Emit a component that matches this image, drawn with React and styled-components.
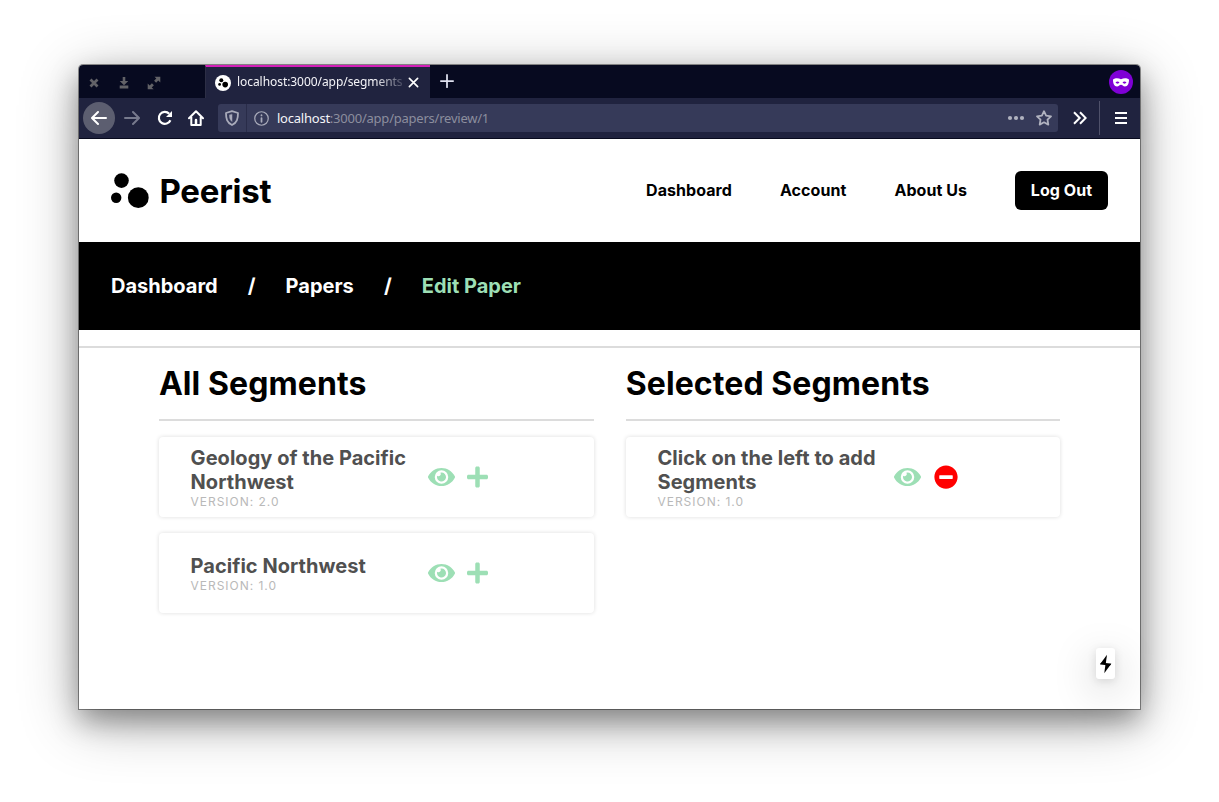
import React from "react";
import styled, { createGlobalStyle, css } from "styled-components";
import { FaEye, FaPlus, FaMinusCircle } from "react-icons/fa";

const GlobalStyle = createGlobalStyle`
  * { box-sizing: border-box; }
  body { margin: 0; background: #fff; }
`;

const Desktop = styled.div`
  height: 802px;
  overflow: hidden;
  padding: 65px 79px 93px;
  background: #fff;
`;

const BrowserWindow = styled.div`
  display: flex;
  flex-direction: column;
  width: 1061px;
  height: 644px;
  border-radius: 4px 4px 0 0;
  background: #fff;
  box-shadow: 0 0 0 1px rgba(0, 0, 0, 0.4), 0 12px 28px rgba(0, 0, 0, 0.34),
    0 12px 60px rgba(0, 0, 0, 0.3);
`;

const TitleBar = styled.div`
  display: flex;
  flex: 0 0 33px;
  background: #070a20;
  border-radius: 4px 4px 0 0;
`;

const WindowControls = styled.div`
  display: flex;
  align-items: center;
  width: 126px;
  padding: 2px 0 0 8px;
  gap: 16px;
  svg { display: block; }
`;

const Tab = styled.div`
  display: flex;
  align-items: center;
  width: 225px;
  padding: 0 11px 0 9px;
  background: #20233f;
  border-top: 2px solid #d31fb8;
  border-left: 1px solid #2c2e45;
`;

const TabTitle = styled.div`
  width: 167px;
  margin: 0 4px 2px 6px;
  overflow: hidden;
  white-space: nowrap;
  color: #f4f4f8;
  font: 12px/18px "Noto Sans", sans-serif;
  letter-spacing: -0.06px;
  mask-image: linear-gradient(to right, #000 138px, transparent 172px);
`;

const NewTab = styled.div`
  display: flex;
  align-items: center;
  padding: 0 0 1px 10px;
`;

const PrivateBadge = styled.div`
  display: flex;
  align-items: center;
  justify-content: center;
  width: 24px;
  height: 24px;
  margin: 5px 7px 0 auto;
  border-radius: 50%;
  background: #7f00d6;
`;

const Toolbar = styled.div`
  display: flex;
  flex: 0 0 41px;
  align-items: center;
  padding-left: 4px;
  background: #20233f;
  border-bottom: 1px solid #080a1e;
`;

const ToolButton = styled.div`
  display: flex;
  flex: 0 0 ${(p) => p.$width || 32}px;
  align-items: center;
  justify-content: center;
  height: 32px;
  ${(p) =>
    p.$round &&
    css`
      border-radius: 50%;
      background: #5c5e70;
    `}
`;

const AddressBar = styled.div`
  display: flex;
  flex: 0 0 840px;
  align-items: center;
  height: 28px;
  margin-left: 7px;
  border-radius: 3px;
  background: #363a59;
`;

const Shield = styled.div`
  display: flex;
  align-items: center;
  justify-content: center;
  width: 29px;
  height: 28px;
  border-right: 1px solid #292c49;
`;

const Url = styled.div`
  flex: 1;
  margin-left: 2px;
  color: #8c8e9e;
  font: 13px/18px "Noto Sans", sans-serif;
  letter-spacing: -0.23px;
  span { color: #f4f4f8; }
`;

const AddressActions = styled.div`
  display: flex;
  align-items: center;
  gap: 11px;
  padding-right: 6px;
`;

const MenuButton = styled.div`
  display: flex;
  align-items: center;
  justify-content: center;
  width: 41px;
  height: 34px;
  padding-left: 2px;
  border-left: 1px solid #4f516a;
`;

const Page = styled.div`
  position: relative;
  flex: 1;
  font-family: Inter, sans-serif;
  color: #000;
`;

const Header = styled.header`
  display: flex;
  align-items: center;
  justify-content: space-between;
  height: 103px;
  padding: 0 32px;
`;

const Brand = styled.div`
  display: flex;
  align-items: center;
  gap: 9.5px;
  font-size: 33px;
  font-weight: 700;
  line-height: 40px;
  letter-spacing: -0.25px;
`;

const Nav = styled.nav`
  display: flex;
  align-items: center;
  gap: 48px;
  font-size: 16px;
  font-weight: 700;
  line-height: 19px;
  letter-spacing: 0.06px;
`;

const LogOut = styled.button`
  width: 93px;
  height: 39px;
  padding: 0;
  border: 0;
  border-radius: 6px;
  background: #000;
  color: #fff;
  font: inherit;
  letter-spacing: inherit;
`;

const Breadcrumbs = styled.div`
  display: flex;
  align-items: center;
  gap: 30.1px;
  height: 88px;
  padding: 0 32px;
  background: #000;
  color: #fff;
  font-size: 20px;
  font-weight: 700;
  line-height: 24px;
`;

const Current = styled.span`
  color: #9ddfb5;
`;

const Content = styled.main`
  margin-top: 16px;
  border-top: 2px solid #dcdcdc;
`;

const Columns = styled.div`
  display: grid;
  grid-template-columns: 1fr 1fr;
  gap: 32px;
  width: 85%;
  margin: 0 auto;
`;

const Column = styled.section`
  display: flex;
  flex-direction: column;
  gap: 16px;
`;

const ColumnTitle = styled.h1`
  height: 73px;
  margin: 0;
  padding: 16px 0 0 0.3px;
  border-bottom: 2px solid #dcdcdc;
  font-size: 32px;
  font-weight: 700;
  line-height: 39px;
  letter-spacing: 0.08px;
`;

const Card = styled.article`
  display: flex;
  align-items: center;
  height: 80px;
  padding-left: 32px;
  border-radius: 4px;
  box-shadow: 0 0 4px rgba(0, 0, 0, 0.14);
`;

const CardText = styled.div`
  flex: 0 0 221px;
  margin-right: 15.95px;
`;

const CardTitle = styled.h2`
  margin: 0;
  color: #505050;
  font-size: 20px;
  font-weight: 700;
  line-height: 24px;
  letter-spacing: 0.04px;
`;

const Version = styled.div`
  color: #b9b9b9;
  font-size: 12px;
  line-height: 15px;
  letter-spacing: 0.97px;
`;

const Actions = styled.div`
  display: flex;
  align-items: center;
  gap: 12px;
  color: #9ddfb5;
  svg { display: block; height: 24px; }
`;

const EyeIcon = styled(FaEye)`
  width: 27px;
`;

const AddIcon = styled(FaPlus)`
  width: 21px;
`;

const RemoveIcon = styled(FaMinusCircle)`
  width: 24px;
  margin-left: 1px;
  color: #f00;
`;

const BoltBadge = styled.div`
  position: absolute;
  right: 25px;
  bottom: 30px;
  display: flex;
  align-items: center;
  justify-content: center;
  width: 19px;
  height: 31px;
  border-radius: 3px;
  background: #fff;
  box-shadow: 0 11px 40px rgba(0, 0, 0, 0.25), 0 2px 10px rgba(0, 0, 0, 0.12);
`;

const Stroke = ({ size = 16, color = "#fff", width = 2, children }) => (
  <svg width={size} height={size} viewBox="0 0 16 16" fill="none" stroke={color} strokeWidth={width} strokeLinecap="round" strokeLinejoin="round">
    {children}
  </svg>
);

const Favicon = () => (
  <svg width="16" height="16" viewBox="0 0 16 16">
    <circle cx="8" cy="8" r="8" fill="#fff" />
    <circle cx="6.3" cy="5.2" r="2" />
    <circle cx="4.6" cy="9.4" r="1.4" />
    <circle cx="10.2" cy="9.6" r="2.8" />
  </svg>
);

const Logo = () => (
  <svg width="39" height="36" viewBox="0 0 39 36">
    <circle cx="10.5" cy="7.6" r="7.3" />
    <circle cx="5.2" cy="24.7" r="5.2" />
    <circle cx="27.3" cy="24.7" r="10.4" />
  </svg>
);

const Bolt = () => (
  <svg width="15" height="20" viewBox="0 0 60 80">
    <path d="M36 3L30.74 41H8L36 3Z" />
    <path d="M25 77L30.26 39H53L25 77Z" />
    <path d="M13.5 33.5L53 39L47.5 46.5L8 41L13.5 33.5Z" />
  </svg>
);

const Segment = ({ title, version, children }) => (
  <Card>
    <CardText>
      <CardTitle>{title}</CardTitle>
      <Version>VERSION: {version}</Version>
    </CardText>
    <Actions>
      <EyeIcon />
      {children}
    </Actions>
  </Card>
);

export default function App() {
  return (
    <Desktop>
      <GlobalStyle />
      <BrowserWindow>
        <TitleBar>
          <WindowControls>
            <svg width="14" height="14" viewBox="0 0 14 14" stroke="#626267" strokeWidth="2.8">
              <path d="M3.500 3.500l7 7M10.500 3.500l-7 7" />
            </svg>
            <svg width="14" height="14" viewBox="0 0 14 14" fill="#626267">
              <path d="M5.700 1h2.600v4h3L7 9.300 2.700 5h3zM2.700 9.500h8.600v3H2.700z" />
            </svg>
            <svg width="14" height="14" viewBox="0 0 14 14" fill="#626267">
              <path d="M7.500 .7H13.300V6.500l-2-2-2.200 2.200-2-2L9.300 2.500zM.7 7.500l2 2 2.200-2.200 2 2L4.700 11.500l2 1.800H.7z" />
            </svg>
          </WindowControls>
          <Tab>
            <Favicon />
            <TabTitle>localhost:3000/app/segments</TabTitle>
            <Stroke size={11} width={2.4}>
              <path d="M2 2l12 12M14 2L2 14" />
            </Stroke>
          </Tab>
          <NewTab>
            <Stroke size={14} color="#e0e2f0" width={2}>
              <path d="M8 1v14M1 8h14" />
            </Stroke>
          </NewTab>
          <PrivateBadge>
            <svg width="16" height="9" viewBox="0 0 16 9">
              <path fill="#fff" fillRule="evenodd" d="M0 1.500C2.500-.3 5.500.1 8 1.200 10.500.1 13.500-.3 16 1.500c0 4-1.200 7-4 7-1.800 0-2.800-1.700-4-1.700S5.800 8.500 4 8.500c-2.800 0-4-3-4-7zM2.500 4.600C3.600 6 5.500 6 6.500 4.600 5.500 3 3.600 3 2.500 4.600zm7 0C10.500 6 12.400 6 13.500 4.600 12.400 3 10.500 3 9.500 4.600z" />
            </svg>
          </PrivateBadge>
        </TitleBar>
        <Toolbar>
          <ToolButton $round>
            <Stroke><path d="M15 8H1.500M7 2L1 8l6 6" /></Stroke>
          </ToolButton>
          <ToolButton $width={34}>
            <Stroke color="#777a8d"><path d="M1 8h13.500M9 2l6 6-6 6" /></Stroke>
          </ToolButton>
          <ToolButton $width={31}>
            <svg width="16" height="16" viewBox="0 0 16 16" fill="none" stroke="#fff" strokeWidth="2.200">
              <path d="M13.400 10.200A6 6 0 1 1 12.200 3.700" />
              <path d="M15 1v6H9z" fill="#fff" stroke="none" />
            </svg>
          </ToolButton>
          <ToolButton $width={31}>
            <Stroke>
              <path d="M1 8.300L8 1.300l7 7M3.300 7v8h9.400V7" />
              <path d="M8 10v4.500" strokeWidth="2.500" />
            </Stroke>
          </ToolButton>
          <AddressBar>
            <Shield>
              <Stroke color="#a9abba" width={1.8}>
                <path d="M8 1.200L14 3c0 6-1 9.500-6 12C3 12.500 2 9 2 3z" />
                <path d="M8 4.500v7C6 10 5.500 8 5.500 5.200z" fill="#a9abba" strokeWidth=".5" />
              </Stroke>
            </Shield>
            <ToolButton $width={28}>
              <Stroke color="#a9abba" size={15} width={1.300}>
                <circle cx="8" cy="8" r="7.200" />
                <path d="M8 7.500v4M8 4.500v.2" strokeWidth="1.900" />
              </Stroke>
            </ToolButton>
            <Url><span>localhost</span>:3000/app/papers/review/1</Url>
            <AddressActions>
              <svg width="18" height="16" viewBox="0 0 18 16" fill="#b0b2bf">
                <circle cx="3" cy="8" r="2.100" />
                <circle cx="9" cy="8" r="2.100" />
                <circle cx="15" cy="8" r="2.100" />
              </svg>
              <Stroke color="#b0b2bf" width={1.800}>
                <path d="M8 1.200l2.100 4.400 4.900.7-3.500 3.400.8 4.900L8 12.300l-4.300 2.300.8-4.900L1 6.300l4.900-.7z" />
              </Stroke>
            </AddressActions>
          </AddressBar>
          <ToolButton $width={41}>
            <svg width="16" height="16" viewBox="0 0 16 16" fill="none" stroke="#fff" strokeWidth="2">
              <path d="M3 2.200L8.700 8 3 13.800M9 2.200L14.700 8l-5.700 5.800" />
            </svg>
          </ToolButton>
          <MenuButton>
            <svg width="12" height="12" viewBox="0 0 12 12" fill="#fff">
              <path d="M0 0h12v2H0zM0 5h12v2H0zM0 10h12v2H0z" />
            </svg>
          </MenuButton>
        </Toolbar>
        <Page>
          <Header>
            <Brand><Logo />Peerist</Brand>
            <Nav>
              <span>Dashboard</span>
              <span>Account</span>
              <span>About Us</span>
              <LogOut>Log Out</LogOut>
            </Nav>
          </Header>
          <Breadcrumbs>
            <span>Dashboard</span>
            <span>/</span>
            <span>Papers</span>
            <span>/</span>
            <Current>Edit Paper</Current>
          </Breadcrumbs>
          <Content>
            <Columns>
              <Column>
                <ColumnTitle>All Segments</ColumnTitle>
                <Segment title="Geology of the Pacific Northwest" version="2.0"><AddIcon /></Segment>
                <Segment title="Pacific Northwest" version="1.0"><AddIcon /></Segment>
              </Column>
              <Column>
                <ColumnTitle>Selected Segments</ColumnTitle>
                <Segment title="Click on the left to add Segments" version="1.0"><RemoveIcon /></Segment>
              </Column>
            </Columns>
          </Content>
          <BoltBadge><Bolt /></BoltBadge>
        </Page>
      </BrowserWindow>
    </Desktop>
  );
}
